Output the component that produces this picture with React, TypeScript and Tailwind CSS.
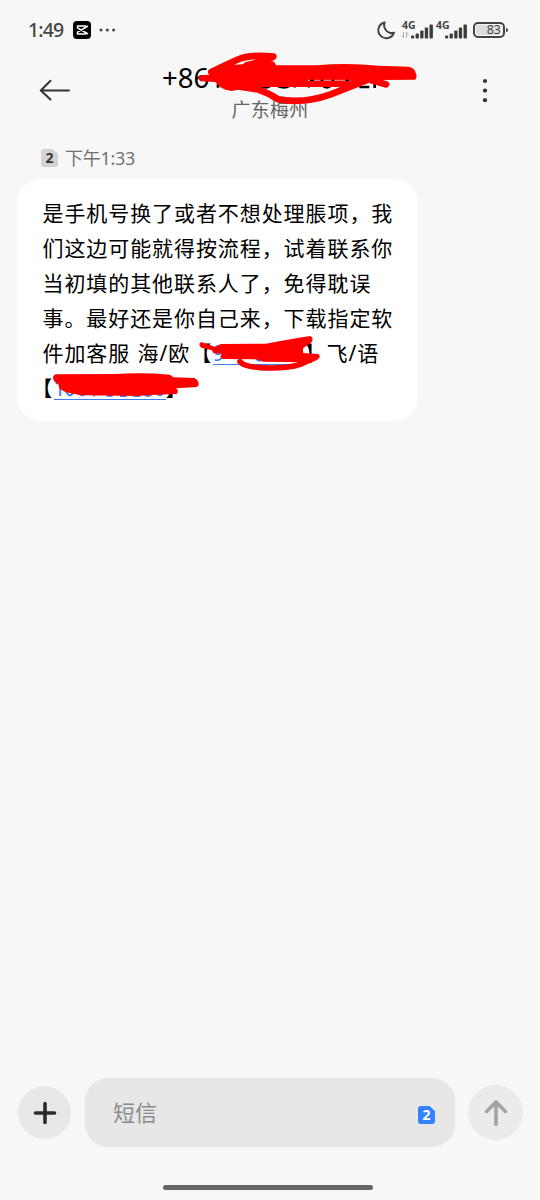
import type { ReactNode } from "react";

function SignalBars() {
  return (
    <svg width="22" height="15" viewBox="0 0 22 15" fill="#3c3c3c">
      <rect x="0" y="11.5" width="3.2" height="3" rx="1" />
      <rect x="4.6" y="9.5" width="3.3" height="5" rx="1" />
      <rect x="9.2" y="6.5" width="3.3" height="8" rx="1" />
      <rect x="13.8" y="3.5" width="3.3" height="11" rx="1" />
      <rect x="18.5" y="0.5" width="3.4" height="14" rx="1" />
    </svg>
  );
}

function StatusBar() {
  return (
    <div className="flex h-[60px] items-center pl-[28px] pr-[32px] text-[#444]">
      <span className="w-[45px] text-[19.5px] font-medium tracking-[-0.9px]">1:49</span>
      <svg width="18" height="18" viewBox="0 0 18 18" fill="none">
        <rect width="18" height="18" rx="4" fill="#000" />
        <path
          d="M15 5 4.5 11.2v1.9h8v-1.9M15 13 4.5 6.8V4.9h8v1.9"
          stroke="#fff"
          strokeWidth="1.5"
          strokeLinejoin="round"
        />
      </svg>
      <svg className="ml-[8px]" width="18" height="4" viewBox="0 0 18 4" fill="#444">
        <circle cx="2" cy="2" r="1.5" />
        <circle cx="8.3" cy="2" r="1.5" />
        <circle cx="14.6" cy="2" r="1.5" />
      </svg>
      <svg className="ml-auto" width="20" height="20" viewBox="0 0 20 20" fill="none">
        <path
          d="M8.6 2.4A8 8 0 1 0 18 12.6C16.5 13.2 15 13.3 13.6 12.8 9.2 11.4 7.2 6.6 8.6 2.4Z"
          stroke="#444"
          strokeWidth="2"
          strokeLinejoin="round"
        />
      </svg>
      <div className="relative ml-[5px] flex h-[18px] w-[32px] items-end justify-end">
        <span className="absolute left-[1px] top-[-2px] text-[10.5px] leading-[12px] font-bold">4G</span>
        <svg className="absolute bottom-[1px] left-0" width="8" height="6" viewBox="0 0 8 6" fill="none">
          <path d="M2.5 0v5.5L0.5 3.5M5.5 6V.5l2 2" stroke="#aaa" strokeWidth="1" />
        </svg>
        <SignalBars />
      </div>
      <div className="relative ml-[2px] flex h-[18px] w-[32px] items-end justify-end">
        <span className="absolute left-[1px] top-[-2px] text-[10.5px] leading-[12px] font-bold">4G</span>
        <SignalBars />
      </div>
      <div className="ml-[6px] flex h-[16px] w-[32px] items-center rounded-[5px] border-2 border-[#444] p-px">
        <div className="flex h-full w-[23px] items-center justify-end rounded-l-[2px] bg-[#ddd] text-[12.5px] leading-none">
          <span className="mr-[-2px] mt-px">83</span>
        </div>
      </div>
      <div className="ml-px h-[4px] w-[2px] rounded-r bg-[#444]" />
    </div>
  );
}

function Header() {
  return (
    <header className="flex h-[79px] pl-[39px]">
      <svg className="mt-[19px]" width="32" height="22" viewBox="0 0 32 22" fill="none">
        <path
          d="M30 11.5H2M11.5 1.8 1.8 11.5l9.7 9"
          stroke="#333"
          strokeWidth="2"
          strokeLinecap="round"
          strokeLinejoin="round"
        />
      </svg>
      <div className="relative ml-[91px] flex w-[216px] flex-col">
        <h1 className="mt-[1px] text-[27.5px] leading-[34px] text-black">+86</h1>
        <p className="mt-[2px] text-center text-[19px] leading-[27px] tracking-[0.3px] text-[#666]">
          广东梅州
        </p>
        <svg
          className="absolute left-[-12px] top-[-20px]"
          width="280"
          height="90"
          viewBox="0 0 840 270"
          fill="none"
        >
          <path
            d="M204 132v11M330 138q20 8 30 0M378 136q25 12 42 0M432 142l4-8M474 142l4-8M516 136q15 12 28 0M628 141h30M674 120v24"
            stroke="#000"
            strokeWidth="8"
          />
          <path
            d="M174 98Q177 90 186 88Q225 66 260 74L366 64Q374 64 378 76L500 76Q590 68 685 77L775 80Q794 83 797 98Q803 113 795 119L690 120Q717 124 718 134Q716 142 704 142L656 128 600 141 310 141 245 153Q212 150 196 126L152 124Q140 115 150 106L180 104Z"
            fill="#f00"
          />
          <path d="M474 121h128" stroke="#ddd" strokeWidth="2" />
          <path d="M480 121h12M512 121h8M545 121h8M586 121h12" stroke="#000" strokeWidth="4" />
          <path
            d="M184 96Q225 76 260 60Q300 42 370 50Q350 62 290 76M222 130Q270 142 324 148Q358 160 384 178Q460 192 540 164L656 118 708 133"
            stroke="#f00"
            strokeWidth="20"
            strokeLinecap="round"
            strokeLinejoin="round"
          />
        </svg>
      </div>
      <svg className="ml-[102px] mt-[18px]" width="10" height="25" viewBox="0 0 10 25" fill="#333">
        <circle cx="5" cy="3" r="2.1" />
        <circle cx="5" cy="12.6" r="2.1" />
        <circle cx="5" cy="22.2" r="2.1" />
      </svg>
    </header>
  );
}

function SimBadge({ fill, color }: { fill: string; color: string }) {
  return (
    <div className="relative h-[18px] w-[17px]">
      <svg width="17" height="18" viewBox="0 0 17 18" fill={fill}>
        <path d="M3 0h8.5L17 5v10a3 3 0 0 1-3 3H3a3 3 0 0 1-3-3V3a3 3 0 0 1 3-3Z" />
      </svg>
      <span
        className="absolute inset-0 text-center text-[14px] leading-[18px] font-bold"
        style={{ color }}
      >
        2
      </span>
    </div>
  );
}

function Line({ children }: { children: ReactNode }) {
  return <div className="flex h-[35px] whitespace-pre">{children}</div>;
}

function Message() {
  return (
    <div className="relative ml-[17px] h-[242px] w-[401px] rounded-[24px] bg-white pl-[25.5px] pt-[17px] text-[21px] leading-[35px] tracking-[0.92px] text-black">
      <Line>是手机号换了或者不想处理脹项，我</Line>
      <Line>们这边可能就得按流程，试着联系你</Line>
      <Line>当初填的其他联系人了，免得耽误</Line>
      <Line>事。最好还是你自己来，下载指定软</Line>
      <Line>
        <span className="w-[95px]">件加客服</span>
        <span className="w-[53px]">海/欧</span>
        <span className="w-[22px]">【</span>
        <span className="mb-[6px] w-[92px] border-b border-[#3d7df0] text-[#3d7df0]">9</span>
        <span className="w-[22px]">】</span>
        <span>飞/语</span>
      </Line>
      <Line>
        <span className="ml-[-11px] w-[22px]">【</span>
        <span className="mb-[6px] w-[112px] border-b border-[#3d7df0] text-[#3d7df0]">1</span>
        <span>】</span>
      </Line>
      <svg
        className="absolute left-[173px] top-[146px]"
        width="240"
        height="50"
        viewBox="0 0 720 150"
        fill="none"
      >
        <path d="M198 100q10 14 22 0" stroke="#3d7df0" strokeWidth="6" />
        <path
          d="M92 57 228 56Q300 42 362 33Q374 43 362 54L339 70V84L385 87Q396 96 380 104L345 112 220 110 200 103 98 102Q86 94 96 86L70 84 66 76 34 68Q22 57 34 51L76 66Z"
          fill="#f00"
        />
        <path
          d="M150 110Q160 124 210 128Q290 132 330 118L376 98"
          stroke="#f00"
          strokeWidth="17"
          strokeLinecap="round"
        />
      </svg>
      <svg
        className="absolute left-[-7px] top-[146px]"
        width="220"
        height="110"
        viewBox="0 0 660 330"
        fill="none"
      >
        <path
          d="M166 195q12 30 28 2M204 200q12 20 28 2M252 214v-6M290 212h18M330 213h20M370 213h20M404 210q10 6 20 0M438 205q12 12 24-2"
          stroke="#3d7df0"
          strokeWidth="6"
        />
        <path
          d="M140 148 315 147Q400 142 480 149L490 157 553 159Q567 165 566 180Q563 187 550 187L498 190Q508 198 500 207L440 209 380 213 220 211Q160 205 148 190L145 178Q130 170 129 158Q130 149 140 148Z"
          fill="#f00"
        />
      </svg>
    </div>
  );
}

function Composer() {
  return (
    <footer className="mt-auto flex items-center pl-[18px] pb-[53px]">
      <button className="flex size-[53px] items-center justify-center rounded-full bg-[#e8e8e8]">
        <svg width="24" height="24" viewBox="0 0 24 24" fill="none">
          <path d="M12 2.5v19M2.5 12h19" stroke="#2b2b2b" strokeWidth="3.6" strokeLinecap="round" />
        </svg>
      </button>
      <div className="ml-[14px] flex h-[69px] w-[370px] items-center justify-between rounded-[23px] bg-[#e7e7e7] pl-[28px] pr-[20px]">
        <span className="text-[22px] text-[#8c8c8c]">短信</span>
        <div className="mt-[4px]">
          <SimBadge fill="#3482ff" color="#ffffff" />
        </div>
      </div>
      <button className="ml-[13px] flex size-[55px] items-center justify-center rounded-full bg-[#ebebeb]">
        <svg width="24" height="28" viewBox="0 0 24 28" fill="none">
          <path
            d="M12 25.5V3M2.6 12.4 12 3l9.4 9.4"
            stroke="#a3a3a3"
            strokeWidth="3.6"
            strokeLinecap="round"
            strokeLinejoin="round"
          />
        </svg>
      </button>
    </footer>
  );
}

export default function App() {
  return (
    <main className="relative flex h-[1200px] w-[540px] flex-col overflow-hidden bg-[#f7f7f7] font-['Noto_Sans','Noto_Sans_CJK_SC',sans-serif]">
      <StatusBar />
      <Header />
      {/* Message timestamp */}
      <div className="flex h-[40px] items-center gap-[7px] pb-[2px] pl-[41px]">
        <SimBadge fill="#d3d3d3" color="#333333" />
        <span className="text-[18px] leading-none tracking-[-0.3px] text-[#717171]">下午1:33</span>
      </div>
      <Message />
      <Composer />
      <div className="absolute bottom-[10px] left-[163px] h-[5px] w-[210px] rounded-full bg-[#666]" />
    </main>
  );
}
